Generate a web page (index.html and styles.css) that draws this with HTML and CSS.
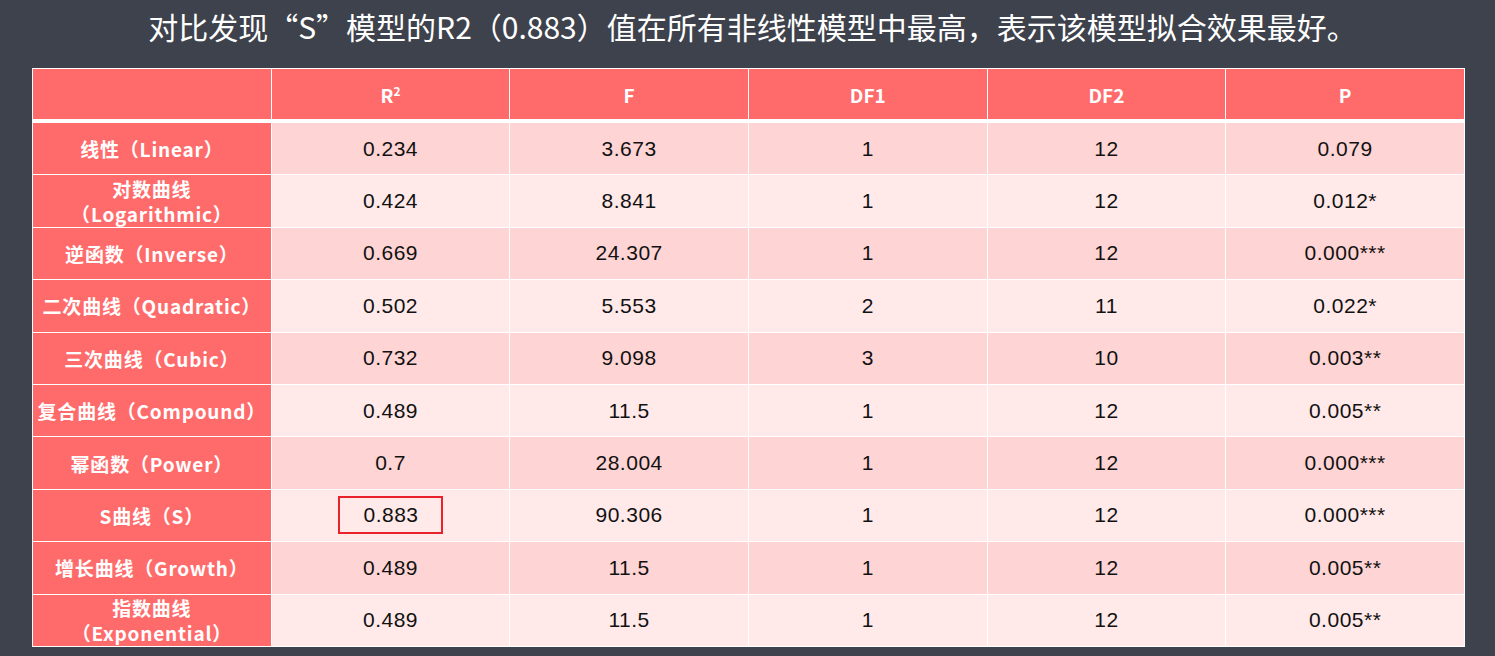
FILE: index.html
```html
<!DOCTYPE html>
<html lang="zh-CN">
<head>
<meta charset="utf-8">
<title>非线性模型对比</title>
<link rel="stylesheet" href="styles.css">
</head>
<body>
<h1 class="title">对比发现“S”模型的R2（0.883）值在所有非线性模型中最高，表示该模型拟合效果最好。</h1>
<table class="models">
  <thead>
    <tr>
      <th></th>
      <th>R<sup>2</sup></th>
      <th>F</th>
      <th>DF1</th>
      <th>DF2</th>
      <th>P</th>
    </tr>
  </thead>
  <tbody>
    <tr><th>线性（Linear）</th><td>0.234</td><td>3.673</td><td>1</td><td>12</td><td>0.079</td></tr>
    <tr><th>对数曲线<br>（Logarithmic）</th><td>0.424</td><td>8.841</td><td>1</td><td>12</td><td>0.012*</td></tr>
    <tr><th>逆函数（Inverse）</th><td>0.669</td><td>24.307</td><td>1</td><td>12</td><td>0.000***</td></tr>
    <tr><th>二次曲线（Quadratic）</th><td>0.502</td><td>5.553</td><td>2</td><td>11</td><td>0.022*</td></tr>
    <tr><th>三次曲线（Cubic）</th><td>0.732</td><td>9.098</td><td>3</td><td>10</td><td>0.003**</td></tr>
    <tr><th>复合曲线（Compound）</th><td>0.489</td><td>11.5</td><td>1</td><td>12</td><td>0.005**</td></tr>
    <tr><th>幂函数（Power）</th><td>0.7</td><td>28.004</td><td>1</td><td>12</td><td>0.000***</td></tr>
    <tr><th>S曲线（S）</th><td><span class="highlight">0.883</span></td><td>90.306</td><td>1</td><td>12</td><td>0.000***</td></tr>
    <tr><th>增长曲线（Growth）</th><td>0.489</td><td>11.5</td><td>1</td><td>12</td><td>0.005**</td></tr>
    <tr><th>指数曲线<br>（Exponential）</th><td>0.489</td><td>11.5</td><td>1</td><td>12</td><td>0.005**</td></tr>
  </tbody>
</table>
</body>
</html>
```

FILE: styles.css
```css
html, body {
  margin: 0;
  padding: 0;
  background: #3e424c;
}

body {
  width: 1495px;
  height: 656px;
  overflow: hidden;
  font-family: "Noto Sans CJK SC", "Liberation Sans", sans-serif;
}

.title {
  margin: 0;
  height: 68px;
  padding-left: 10px;
  line-height: 52px;
  text-align: center;
  color: #ffffff;
  font-size: 30px;
  font-weight: 400;
  letter-spacing: 0;
}

.models {
  margin-left: 32px;
  width: 1433px;
  table-layout: fixed;
  border-collapse: collapse;
  border: 1px solid #ffffff;
}

.models th,
.models td {
  border: 1px solid #ffffff;
  text-align: center;
  vertical-align: middle;
  padding: 0 4px;
}

.models thead th {
  height: 50px;
  background: #ff6b6b;
  color: #ffffff;
  font-size: 19px;
  font-weight: 700;
  border-bottom: 4px solid #ffffff;
}

.models thead sup {
  font-size: 12px;
  vertical-align: 7px;
  line-height: 0;
}

.models tbody th {
  height: 51.4px;
  background: #ff6b6b;
  color: #ffffff;
  font-size: 19px;
  font-weight: 700;
  line-height: 25px;
  letter-spacing: 0.8px;
  padding: 0;
}

.models tbody td {
  font-family: "Liberation Sans", "Noto Sans CJK SC", sans-serif;
  font-size: 21px;
  letter-spacing: 0.5px;
  color: #111111;
}

.models tbody tr:nth-child(odd) td {
  background: #ffd4d4;
}

.models tbody tr:nth-child(even) td {
  background: #ffe9e9;
}

.highlight {
  display: inline-block;
  padding: 6px 22px 6px 23px;
  border: 2px solid #e8212a;
  line-height: 22px;
}
```
